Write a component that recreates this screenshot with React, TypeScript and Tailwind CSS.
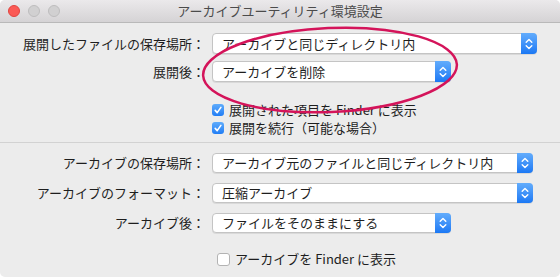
import React from "react";

const font = { fontFamily: '"Noto Sans CJK JP", "Noto Sans", sans-serif' };

function Stepper() {
  return (
    <div className="w-[16px] self-stretch rounded-r-[4px] bg-gradient-to-b from-[#62acfc] to-[#1a78f4] flex items-center justify-center -my-px -mr-px">
      <svg width="10" height="14" viewBox="0 0 10 14" fill="none">
        <path d="M2.2 5.2 L5 2.4 L7.8 5.2" stroke="white" strokeWidth="1.4" strokeLinecap="round" strokeLinejoin="round" />
        <path d="M2.2 8.8 L5 11.6 L7.8 8.8" stroke="white" strokeWidth="1.4" strokeLinecap="round" strokeLinejoin="round" />
      </svg>
    </div>
  );
}

function Popup({ text, w, h }: { text: string; w: string; h: string }) {
  return (
    <div className={`ml-[7px] ${w} ${h} bg-white border border-[#c4c4c4] rounded-[4px] flex items-stretch shadow-[0_1px_0_rgba(0,0,0,0.08)]`}>
      <div className="flex-1 flex items-center pl-[9px] text-[13px] text-[#1e1e1e] whitespace-nowrap">{text}</div>
      <Stepper />
    </div>
  );
}

function Row({ label, text, w, h, mt }: { label: string; text: string; w: string; h: string; mt: string }) {
  return (
    <div className={`flex items-center ${mt}`}>
      <div className="w-[205px] text-right text-[13px] text-[#1e1e1e] whitespace-nowrap">{label}</div>
      <Popup text={text} w={w} h={h} />
    </div>
  );
}

function Check({ checked }: { checked: boolean }) {
  if (checked) {
    return (
      <div className="w-[12px] h-[12px] rounded-[3px] bg-gradient-to-b from-[#5eabfb] to-[#1f7df5] flex items-center justify-center">
        <svg width="10" height="10" viewBox="0 0 10 10" fill="none">
          <path d="M2.2 5.4 L4.2 7.6 L7.9 2.4" stroke="white" strokeWidth="1.6" strokeLinecap="round" strokeLinejoin="round" />
        </svg>
      </div>
    );
  }
  return <div className="w-[13px] h-[13px] rounded-[3px] bg-white border border-[#b3b3b3]" />;
}

export default function App() {
  return (
    <div className="w-[560px] h-[277px] bg-white" style={font}>
      <div className="relative w-[560px] h-[277px] bg-[#ececec] rounded-t-[5px] rounded-b-[5px] overflow-hidden">
        <div className="h-[23px] bg-gradient-to-b from-[#ebe9eb] to-[#d5d3d5] border-b border-[#b9b9b9] flex items-center relative">
          <div className="flex items-center gap-[8px] pl-[8px]">
            <div className="w-[12px] h-[12px] rounded-full bg-[#fb5a55] border border-[#e0443f]" />
            <div className="w-[12px] h-[12px] rounded-full bg-[#d1d0d1] border border-[#bdbcbd]" />
            <div className="w-[12px] h-[12px] rounded-full bg-[#d1d0d1] border border-[#bdbcbd]" />
          </div>
          <div className="absolute inset-0 flex items-center justify-center text-[13px] text-[#4b4b4b]">
            アーカイブユーティリティ環境設定
          </div>
        </div>

        <div className="pt-[10px]">
          <Row label="展開したファイルの保存場所：" text="アーカイブと同じディレクトリ内" w="w-[325px]" h="h-[21px]" mt="" />
          <Row label="展開後：" text="アーカイブを削除" w="w-[239px]" h="h-[21px]" mt="mt-[7px]" />
          <div className="flex items-center h-[16px] mt-[20px] pl-[212px] gap-[5px] text-[13px] text-[#1e1e1e]">
            <Check checked />
            <span>展開された項目を Finder に表示</span>
          </div>
          <div className="flex items-center h-[16px] mt-[2px] pl-[212px] gap-[5px] text-[13px] text-[#1e1e1e]">
            <Check checked />
            <span>展開を続行（可能な場合）</span>
          </div>
          <div className="mt-[6px] h-px bg-[#d2d2d2]" />
          <Row label="アーカイブの保存場所：" text="アーカイブ元のファイルと同じディレクトリ内" w="w-[321px]" h="h-[20px]" mt="mt-[10px]" />
          <Row label="アーカイブのフォーマット：" text="圧縮アーカイブ" w="w-[321px]" h="h-[20px]" mt="mt-[10px]" />
          <Row label="アーカイブ後：" text="ファイルをそのままにする" w="w-[239px]" h="h-[20px]" mt="mt-[10px]" />
          <div className="flex items-center h-[16px] mt-[18px] pl-[217px] gap-[5px] text-[13px] text-[#1e1e1e]">
            <Check checked={false} />
            <span>アーカイブを Finder に表示</span>
          </div>
        </div>

        <svg className="absolute left-0 top-0 pointer-events-none" width="560" height="277" viewBox="0 0 560 277">
          <ellipse cx="330" cy="70" rx="127" ry="42" transform="rotate(-2.5 330 70)" fill="none" stroke="#d4145a" strokeWidth="2.5" />
        </svg>
      </div>
    </div>
  );
}
